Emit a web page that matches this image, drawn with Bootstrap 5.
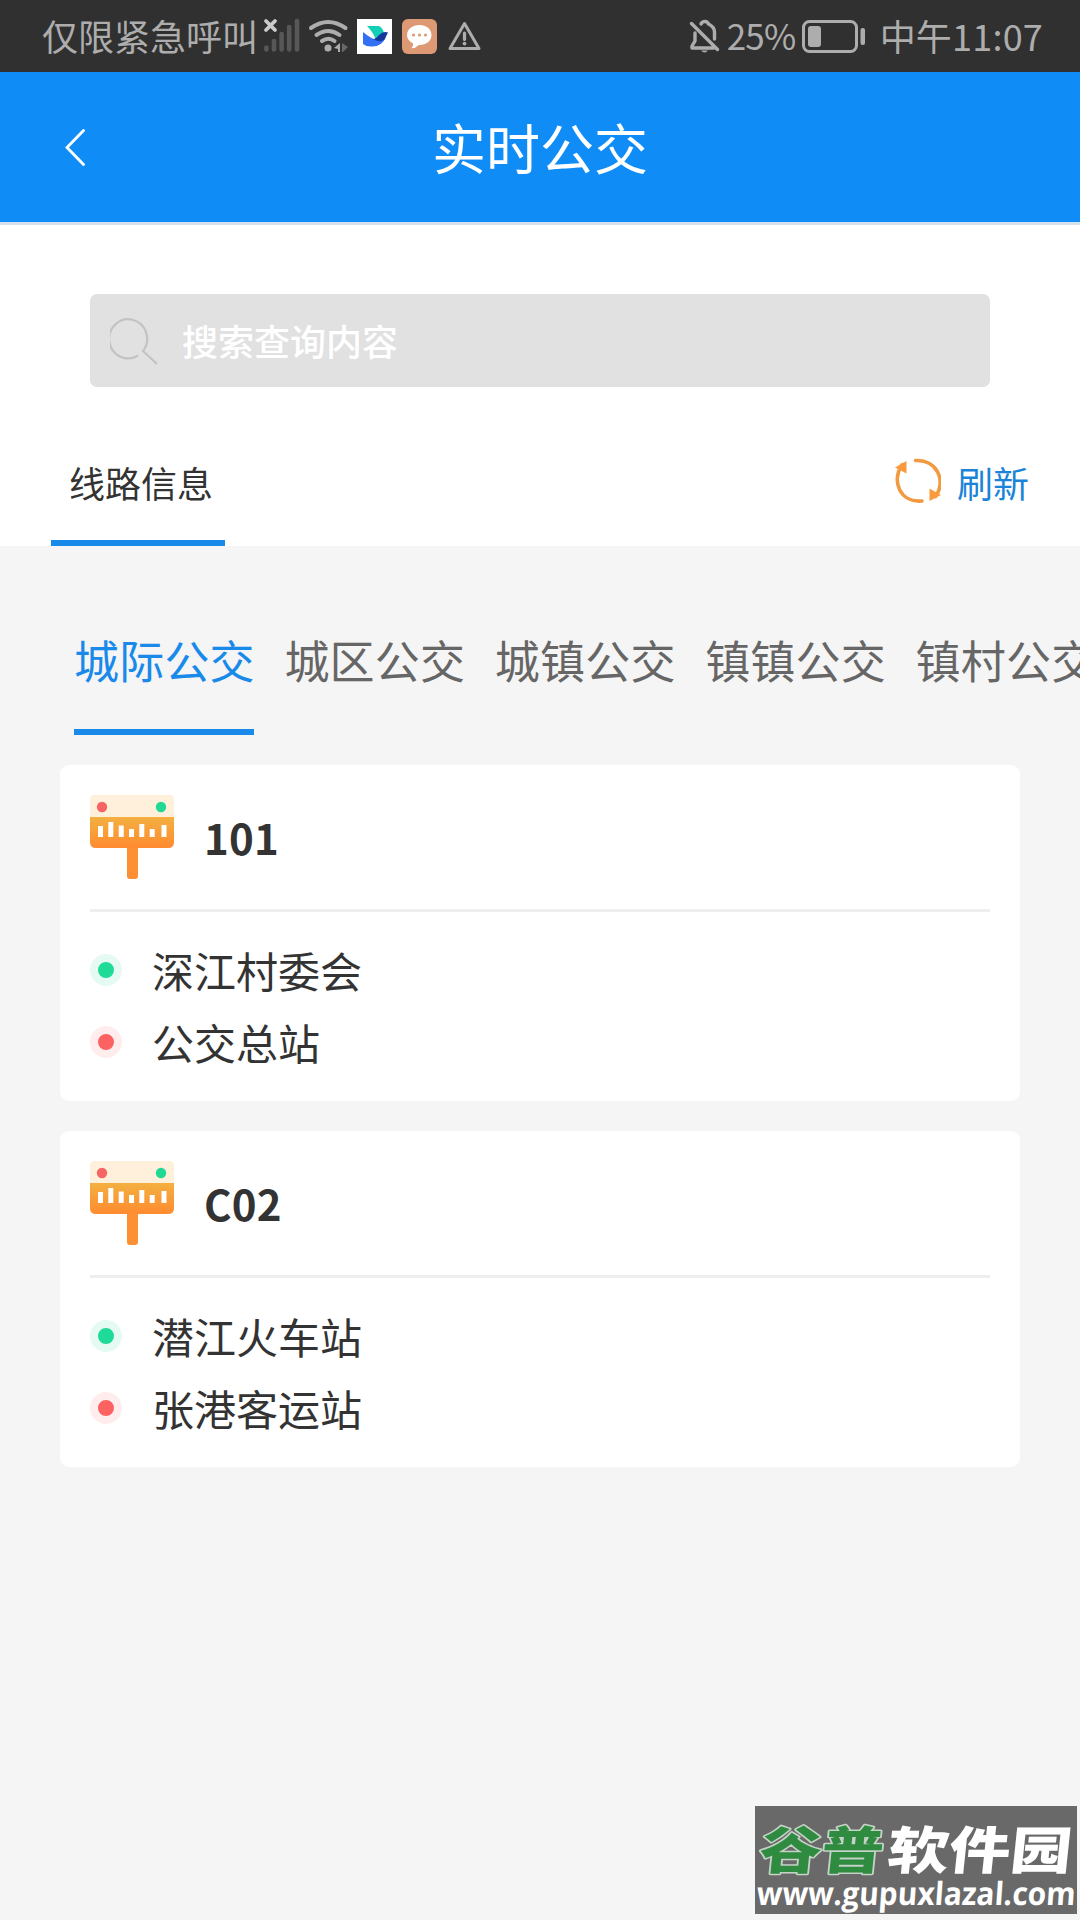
<!DOCTYPE html>
<html lang="zh-CN">
<head>
<meta charset="utf-8">
<meta name="viewport" content="width=device-width, initial-scale=1">
<title>实时公交</title>
<link href="https://cdn.jsdelivr.net/npm/bootstrap@5.3.0/dist/css/bootstrap.min.css" rel="stylesheet">
<style>
body { font-family: "Noto Sans CJK SC", "Noto Sans", sans-serif; color: #333; background: #f5f5f5; line-height: 1; }
svg { display: block; flex: none; }
.screen { height: 1920px; }
.status-bar { height: 72px; background: #303030; color: #adadad; font-size: 36px; padding: 0 37px 0 42px; }
.status-text { line-height: 70px; white-space: nowrap; }
.status-text.percent { width: 71px; font-size: 35px; letter-spacing: -.8px; }
.status-text.clock { letter-spacing: .2px; }
.app-bar { height: 153px; background: #108cf7; border-bottom: 3px solid #d5e1ec; padding: 0 65px; }
.app-title { font-size: 54px; line-height: 150px; }
.app-side { width: 101px; padding-top: 2px; }
.top-panel { height: 321px; padding: 69px 51px 0; }
.search-box { height: 93px; margin: 0 39px; padding: 0 20px; border-radius: 7px; background: #e1e1e1; color: #fff; font-size: 36px; font-weight: 500; gap: 22px; }
.search-box span { padding-bottom: 1px; }
.info-row { height: 159px; font-size: 36px; }
.info-tab { width: 174px; height: 127px; border-bottom: 6px solid #1a8aea; line-height: 78px; padding: 24px 0 0 6px; }
.refresh { color: #1b84d8; height: 64px; gap: 16px; margin-top: 30px; }
.refresh svg { margin-top: -1px; }
.kinds { height: 189px; padding-left: 74px; gap: 30px; font-size: 45px; color: #666; }
.kinds .nav-item { flex: none; width: 180.400px; height: 189px; padding-top: 64px; line-height: 100px; border-bottom: 6px solid transparent; letter-spacing: .2px; }
.kinds .current { color: #1a8aea; border-color: #1a8aea; }
.route-list { padding: 30px 60px 0; gap: 30px; }
.route-card { height: 336px; border: 0; border-radius: 9px; padding: 0 30px; color: #333; }
.route-head { height: 147px; border-bottom: 3px solid #eee; gap: 30px; padding-top: 30px; }
.route-name { font-size: 42px; font-weight: 700; line-height: 84px; letter-spacing: .2px; }
.stops { padding-top: 22px; }
.stop-row { height: 72px; gap: 30px; font-size: 42px; line-height: 72px; }
.dot { width: 32px; height: 32px; border: 8px solid #e5faf3; border-radius: 50%; background: #1fdb98; flex: none; }
.dot.end { border-color: #ffeded; background: #fc6262; }
.site-mark { right: 3px; bottom: 6px; width: 322px; height: 108px; background: #696969; }
</style>
</head>
<body>
<main class="screen position-relative overflow-hidden">
  <div class="status-bar d-flex align-items-start justify-content-between">
    <div class="d-flex">
      <span class="status-text">仅限紧急呼叫</span>
      <svg width="230" height="72" viewBox="258 0 230 72">
        <path d="M266 21l9 9m0-9l-9 9" stroke="#cacaca" stroke-width="3.800" stroke-linecap="round"/>
        <path d="M266.400 47.500v2M274 41v8.500M281.600 34v15.500M289.200 27v22.500M297 21v28.500" stroke="#575757" stroke-width="4.600" stroke-linecap="round"/>
        <g fill="none" stroke="#adadad" stroke-width="4" stroke-linecap="round">
          <path d="M311 28q17-12 34.500 0M316.500 35q12-8 23 0M322 41q6.500-4.500 12.500 0"/>
        </g>
        <circle cx="328" cy="48" r="3.500" fill="#adadad"/>
        <path d="M340 43v9h-2v-3l-4-1z" fill="#adadad"/><path d="M342 43l6 4-5 5h-1z" fill="#686868"/>
        <path fill="#fff" d="M357 19h35v35h-35z"/>
        <path d="M367 26h12q4 2 5 7-4 0-8 7-3-8-9-14z" fill="#13cfb5"/><path d="M363 32q8 7 15 8l8-3q-4 10-15 9.500-5 0-8-2.500z" fill="#3370f5"/><path d="M373 39q3 0 6-4 4-4 9-2.500l-3.500 7q-5 3.500-11.500-.5z" fill="#16379b"/>
        <rect x="402" y="19" width="35" height="35" rx="6" fill="#dd9973"/>
        <path d="M419.500 25c7 0 12 4.300 12 10s-5 10-12 10q-2 0-4 2.500-2 1-4 .5 2-2 1.500-4.500c-4-2-6-5-6-8.500 0-5.700 5.500-10 12.500-10z" fill="#fff"/>
        <g fill="#dd9973"><circle cx="413.500" cy="35" r="1.600"/><circle cx="419.500" cy="35" r="1.600"/><circle cx="425.500" cy="35" r="1.600"/></g>
        <path d="M464.500 23.500l14.500 25h-29z" fill="none" stroke="#adadad" stroke-width="3" stroke-linejoin="round"/><path d="M464.500 33v6.500" stroke="#adadad" stroke-width="3.200" stroke-linecap="round"/><circle cx="464.500" cy="43.600" r="1.900" fill="#adadad"/>
      </svg>
    </div>
    <div class="d-flex">
      <svg width="38" height="72" viewBox="689 0 38 72">
        <g fill="none" stroke="#adadad" stroke-width="3.400" stroke-linecap="round" stroke-linejoin="round">
          <path d="M691.500 23.500L717.500 49.500M695 33v8l-3 5v2h22M701 24q1-2.500 4-2.500 2.500 0 3.500 2.500 6 3 6 8v7"/>
        </g>
        <path d="M701 50.500h7q-3.500 4-7 0z" fill="#adadad"/>
      </svg>
      <span class="status-text percent">25%</span>
      <svg width="82" height="72" viewBox="798 0 82 72">
        <rect x="803.500" y="21.500" width="53" height="30" rx="6" fill="none" stroke="#adadad" stroke-width="3"/>
        <rect x="808" y="26" width="13" height="21" rx="3" fill="#adadad"/>
        <rect x="860.500" y="28" width="4.500" height="17" rx="2" fill="#adadad"/>
      </svg>
      <span class="status-text clock">中午11:07</span>
    </div>
  </div>

  <header class="app-bar d-flex align-items-center justify-content-between text-white">
    <div class="app-side"><svg width="22" height="38" viewBox="0 0 22 38"><path d="M18.500 1.500L2 18.500l16.500 17" fill="none" stroke="#fff" stroke-width="2.800" stroke-linecap="round"/></svg></div>
    <h1 class="app-title fw-normal m-0">实时公交</h1>
    <div class="app-side"></div>
  </header>

  <section class="top-panel bg-white">
    <div class="search-box d-flex align-items-center">
      <svg width="50" height="50" viewBox="-1 0 50 50"><path d="M27 39.500A19 19.500 0 1 1 32 35L46 48" fill="none" stroke="#c3c3c3" stroke-width="2.200"/></svg>
      <span>搜索查询内容</span>
    </div>
    <div class="info-row d-flex justify-content-between align-items-end">
      <div class="info-tab text-center">线路信息</div>
      <div class="refresh d-flex align-items-center align-self-center">
        <svg width="47" height="48" viewBox="894 458 47 48">
          <path d="M915.500 461.500c22-1 31 21 20 36M922 502c-22 2-31-20-20-36" fill="none" stroke="#f19a42" stroke-width="3.600" stroke-linecap="round"/>
          <path d="M895 468.500l11.500-6.500v12.500zM941 496l-11.500-6.500v12.500z" fill="#fb9a3d"/>
        </svg>
        <span>刷新</span>
      </div>
    </div>
  </section>

  <nav class="kinds nav flex-nowrap text-nowrap">
    <div class="nav-item current">城际公交</div>
    <div class="nav-item">城区公交</div>
    <div class="nav-item">城镇公交</div>
    <div class="nav-item">镇镇公交</div>
    <div class="nav-item">镇村公交</div>
  </nav>

  <section class="route-list d-flex flex-column">
    <article class="route-card card">
      <div class="route-head d-flex align-items-start">
        <svg width="84" height="84" viewBox="0 0 84 84">
          <defs><linearGradient id="board" x1="0" y1="0" x2="0" y2="1"><stop stop-color="#f3b040"/><stop offset="1" stop-color="#ff8b30"/></linearGradient></defs>
          <rect x="37" y="48" width="11" height="36" rx="3" fill="#fd8f34"/>
          <path d="M0 22V5q0-5 5-5h74q5 0 5 5v17z" fill="#fef0da"/>
          <path d="M0 22h84v25q0 6-6 6H6q-6 0-6-6z" fill="url(#board)"/>
          <circle cx="12" cy="12" r="5.200" fill="#f76464"/><circle cx="71" cy="12" r="5.200" fill="#20d994"/>
          <path d="M10.500 31v11M20.800 27v15M31.200 30.500v11.500M41.500 34v8M51.800 29v13M62.200 34v8M74 30v12" stroke="#fff" stroke-width="5"/>
        </svg>
        <div class="route-name">101</div>
      </div>
      <div class="stops">
        <div class="stop-row d-flex align-items-center"><span class="dot"></span><span>深江村委会</span></div>
        <div class="stop-row d-flex align-items-center"><span class="dot end"></span><span>公交总站</span></div>
      </div>
    </article>
    <article class="route-card card">
      <div class="route-head d-flex align-items-start">
        <svg width="84" height="84" viewBox="0 0 84 84">
          <rect x="37" y="48" width="11" height="36" rx="3" fill="#fd8f34"/>
          <path d="M0 22V5q0-5 5-5h74q5 0 5 5v17z" fill="#fef0da"/>
          <path d="M0 22h84v25q0 6-6 6H6q-6 0-6-6z" fill="url(#board)"/>
          <circle cx="12" cy="12" r="5.200" fill="#f76464"/><circle cx="71" cy="12" r="5.200" fill="#20d994"/>
          <path d="M10.500 31v11M20.800 27v15M31.200 30.500v11.500M41.500 34v8M51.800 29v13M62.200 34v8M74 30v12" stroke="#fff" stroke-width="5"/>
        </svg>
        <div class="route-name">C02</div>
      </div>
      <div class="stops">
        <div class="stop-row d-flex align-items-center"><span class="dot"></span><span>潜江火车站</span></div>
        <div class="stop-row d-flex align-items-center"><span class="dot end"></span><span>张港客运站</span></div>
      </div>
    </article>
  </section>

  <aside class="site-mark position-absolute">
    <svg class="overflow-visible" width="322" height="108" viewBox="0 0 322 108">
      <g font-family="'Noto Sans CJK SC', sans-serif" font-weight="900" font-size="51">
        <text transform="translate(3 63) skewX(-6)" textLength="124" lengthAdjust="spacingAndGlyphs" fill="#2f8b40" stroke="#c5d3c7" stroke-width="3" paint-order="stroke" stroke-linejoin="round">谷普</text>
        <text transform="translate(131 63) skewX(-6)" textLength="184" lengthAdjust="spacingAndGlyphs" fill="#fff">软件园</text>
      </g>
      <text transform="translate(1 99) skewX(-4)" font-family="'Open Sans', sans-serif" font-weight="700" font-size="32" textLength="319" lengthAdjust="spacingAndGlyphs" fill="#fff">www.gupuxlazal.com</text>
    </svg>
  </aside>
</main>
<script src="https://cdn.jsdelivr.net/npm/bootstrap@5.3.0/dist/js/bootstrap.bundle.min.js"></script>
</body>
</html>
